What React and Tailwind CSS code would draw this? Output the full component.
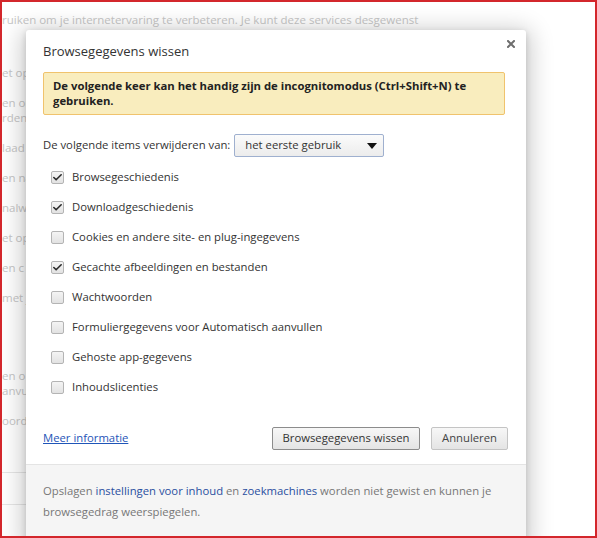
import { Check } from 'lucide-react';

const items = [
  { label: 'Browsegeschiedenis', checked: true },
  { label: 'Downloadgeschiedenis', checked: true },
  { label: 'Cookies en andere site- en plug-ingegevens', checked: false },
  { label: 'Gecachte afbeeldingen en bestanden', checked: true },
  { label: 'Wachtwoorden', checked: false },
  { label: 'Formuliergegevens voor Automatisch aanvullen', checked: false },
  { label: 'Gehoste app-gegevens', checked: false },
  { label: 'Inhoudslicenties', checked: false },
];

// bits of the settings page that peek out left of the dialog
const sideLines = [
  ['et op', 'mt-[38px]'],
  ['en on', 'mt-[15px]'],
  ['rden', 'mt-0'],
  ['laad', 'mt-[15px]'],
  ['en na', 'mt-[15px]'],
  ['nalw', 'mt-[15px]'],
  ['et op', 'mt-[15px]'],
  ['en c', 'mt-[15px]'],
  ['met j', 'mt-[15px]'],
  ['en o', 'mt-[63px]'],
  ['anvul', 'mt-0'],
  ['oord', 'mt-[15px]'],
];

function Checkbox({ checked }) {
  return (
    <span className="flex h-[13px] w-[13px] items-center justify-center rounded-[2px] border border-[#b4b4b4] bg-gradient-to-b from-[#f4f4f4] to-[#e2e2e2]">
      {checked && <Check size={11} strokeWidth={3.5} className="text-[#2a2a2a]" />}
    </span>
  );
}

function ClearDataDialog() {
  return (
    <div className="absolute left-[24px] top-[28px] w-[500px] rounded-t-[3px] bg-white shadow-[0_4px_23px_5px_rgba(0,0,0,0.2),0_2px_6px_rgba(0,0,0,0.15)]">
      <div className="relative pl-[17px] pr-[21px] pt-[13px]">
        <h1 className="text-[13px] leading-[16px] text-[#333]">Browsegegevens wissen</h1>
        <button className="absolute left-[481px] top-[10px] h-[8px] w-[8px]">
          <svg viewBox="0 0 8 8" className="h-[8px] w-[8px]">
            <path d="M1 1L7 7M7 1L1 7" stroke="#6e6e6e" strokeWidth="2" strokeLinecap="square" />
          </svg>
        </button>

        <div className="mt-[13px] rounded-[2px] border border-[#f0c36d] bg-[#f9edbe] px-[9px] pb-[6px] pt-[5px] text-[11.3px] font-bold leading-[15px] text-[#222]">
          De volgende keer kan het handig zijn de incognitomodus (Ctrl+Shift+N) te gebruiken.
        </div>

        <div className="mt-[19px] flex items-center gap-[4px] text-[11.3px] text-[#333]">
          <span>De volgende items verwijderen van:</span>
          <div className="flex h-[23px] w-[150px] items-center justify-between rounded-[2px] border border-[#9fb0cf] bg-gradient-to-b from-[#fbfbfb] to-[#ececec] pl-[10px] pr-[6px]">
            <span>het eerste gebruik</span>
            <span className="h-0 w-0 border-x-[5px] border-t-[6px] border-x-transparent border-t-[#111]" />
          </div>
        </div>

        <ul className="mt-[5px] flex flex-col">
          {items.map(item => (
            <li key={item.label} className="flex h-[30px] items-center gap-[8px] pl-[8px] text-[11.3px] text-[#333]">
              <Checkbox checked={item.checked} />
              <span>{item.label}</span>
            </li>
          ))}
        </ul>

        <div className="mt-[25px] flex items-center pb-[14px]">
          <a href="#" className="text-[11.3px] text-[#1f55b8] underline">Meer informatie</a>
          <div className="ml-auto mr-[-3px] flex gap-[11px]">
            <button className="h-[23px] w-[148px] rounded-[2px] border border-[#8c8c8c] bg-gradient-to-b from-[#f7f7f7] to-[#e4e4e4] text-[11.3px] text-[#333]">
              Browsegegevens wissen
            </button>
            <button className="h-[23px] w-[77px] rounded-[2px] border border-[#c4c4c4] bg-gradient-to-b from-[#f7f7f7] to-[#e4e4e4] text-[11.3px] text-[#444]">
              Annuleren
            </button>
          </div>
        </div>
      </div>

      <div className="h-[80px] border-t border-[#e4e4e4] bg-[#f5f5f5] pl-[17px] pr-[20px] pt-[15px] text-[11.3px] leading-[21px] text-[#777]">
        Opslagen <a href="#" className="text-[#2a4fa0]">instellingen voor inhoud</a> en{' '}
        <a href="#" className="text-[#2a4fa0]">zoekmachines</a> worden niet gewist en kunnen je browsegedrag
        weerspiegelen.
      </div>
    </div>
  );
}

export default function App() {
  return (
    <div
      className="relative h-[538px] w-[597px] overflow-hidden border-2 border-[#d3272c] bg-white"
      style={{ fontFamily: '"Open Sans", "Noto Sans", sans-serif' }}
    >
      <div className="pt-[10px] text-[11.5px] leading-[15px] text-[#c6c6c6]">
        <p className="whitespace-nowrap">ruiken om je internetervaring te verbeteren. Je kunt deze services desgewenst</p>
        {sideLines.map(([text, gap], i) => (
          <p key={i} className={`${gap} whitespace-nowrap`}>{text}</p>
        ))}
        <div className="mt-[44px] h-px w-[40px] bg-[#e6e6e6]" />
        <div className="mt-[31px] h-px w-[40px] bg-[#e6e6e6]" />
      </div>
      <ClearDataDialog />
    </div>
  );
}
